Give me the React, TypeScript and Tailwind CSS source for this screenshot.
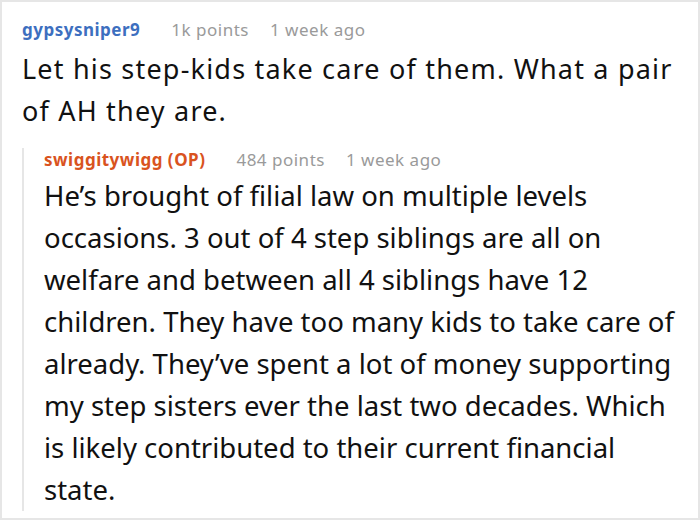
import React from 'react';

const comment = {
  user: 'gypsysniper9',
  points: '1k points',
  time: '1 week ago',
  text: 'Let his step-kids take care of them. What a pair of AH they are.',
};

const reply = {
  user: 'swiggitywigg (OP)',
  points: '484 points',
  time: '1 week ago',
  // the reference wraps the tail of this reply a little earlier than our font does
  lines: [
    'He\u2019s brought of filial law on multiple levels occasions. 3 out of 4 step siblings are all on welfare and between all 4 siblings have 12 children. They have too many kids to take care of already. They\u2019ve spent a lot of money supporting my step sisters ever the last two decades. Which',
    'is likely contributed to their current financial',
    'state.',
  ],
};

function Meta({ user, points, time, userClass }: { user: string; points: string; time: string; userClass: string }) {
  return (
    <div className="flex items-baseline text-[17px] leading-[24px] tracking-[0.5px]">
      <span className={`font-bold mr-[31px] ${userClass}`}>{user}</span>
      <span className="text-[#9a9a9a] mr-[21px]">{points}</span>
      <span className="text-[#9a9a9a]">{time}</span>
    </div>
  );
}

export default function App() {
  return (
    <div
      className="w-[700px] h-[520px] bg-white border-2 border-[#e6e6e6] overflow-hidden text-[#111]"
      style={{ fontFamily: '"Noto Sans", "Open Sans", sans-serif' }}
    >
      <div className="pl-5 pr-1 pt-[16px]">
        <Meta user={comment.user} points={comment.points} time={comment.time} userClass="text-[#3d6fbf]" />
        <p className="text-[27px] leading-[42px] tracking-[1.2px] mt-[6px]">{comment.text}</p>

        <div className="mt-[16px] border-l-2 border-[#e6e6e6] pl-5">
          <Meta user={reply.user} points={reply.points} time={reply.time} userClass="text-[#d9531e]" />
          <p className="text-[27.5px] leading-[42px] mt-[3px]">
            {reply.lines.map((line, i) => (
              <React.Fragment key={i}>
                {i > 0 && <br />}
                {line}
              </React.Fragment>
            ))}
          </p>
        </div>
      </div>
    </div>
  );
}
